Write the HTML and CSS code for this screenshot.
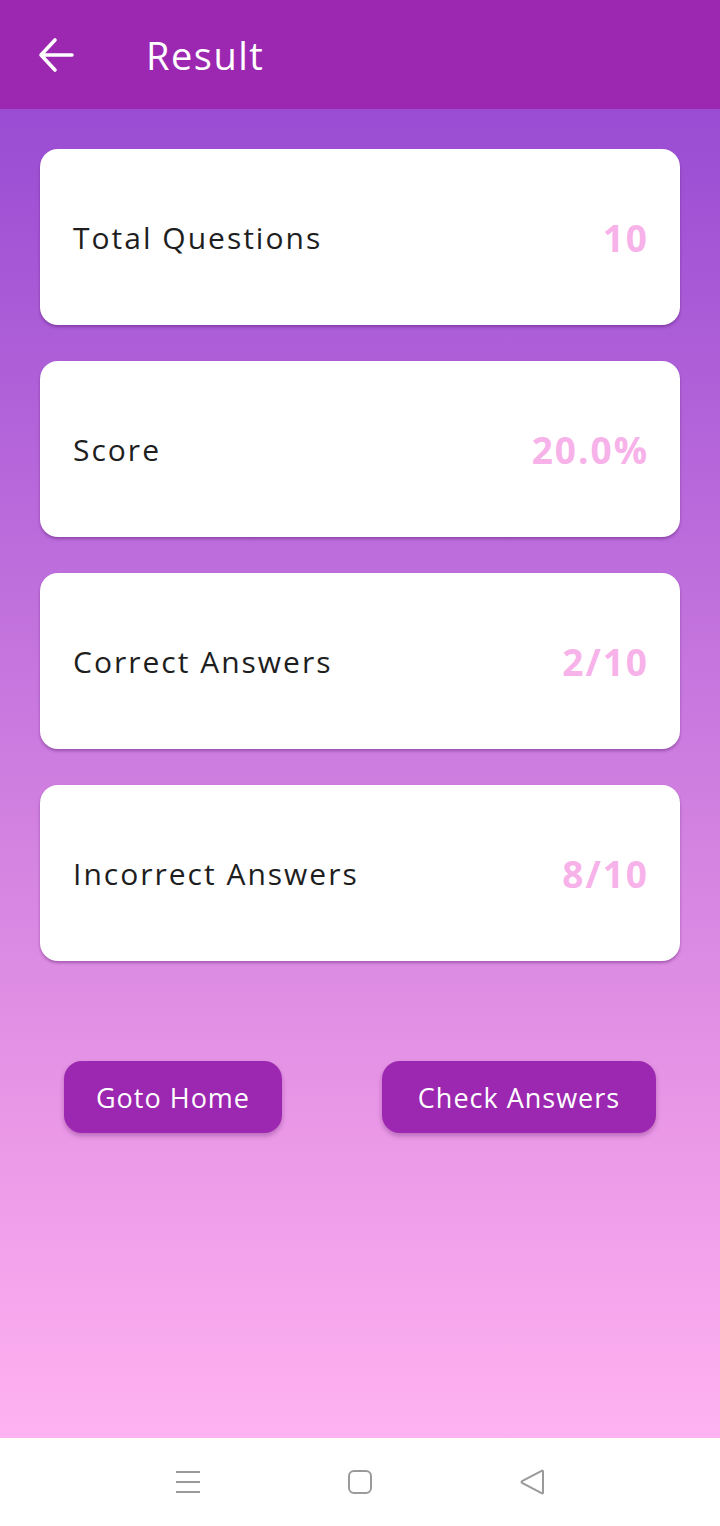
FILE: index.html
```html
<!DOCTYPE html>
<html>
<head>
<meta charset="utf-8">
<link rel="stylesheet" href="styles.css">
</head>
<body>
<div class="screen">
  <header class="appbar">
    <svg class="back" width="36" height="36" viewBox="0 0 36 36"><path d="M34 18H3 M17 3 L3 18 L17 33" fill="none" stroke="#fff" stroke-width="3.6" stroke-linecap="round" stroke-linejoin="round"/></svg>
    <h1 class="title">Result</h1>
  </header>
  <main class="content">
    <div class="card"><span class="label">Total Questions</span><span class="value">10</span></div>
    <div class="card"><span class="label">Score</span><span class="value">20.0%</span></div>
    <div class="card"><span class="label">Correct Answers</span><span class="value">2/10</span></div>
    <div class="card"><span class="label">Incorrect Answers</span><span class="value">8/10</span></div>
    <div class="actions">
      <button class="btn btn-home">Goto Home</button>
      <button class="btn btn-check">Check Answers</button>
    </div>
  </main>
  <nav class="navbar">
    <svg width="28" height="28" viewBox="0 0 28 28"><g stroke="#9a9a9a" stroke-width="2"><line x1="2" y1="4" x2="26" y2="4"/><line x1="2" y1="14" x2="26" y2="14"/><line x1="2" y1="24" x2="26" y2="24"/></g></svg>
    <svg width="28" height="28" viewBox="0 0 28 28"><rect x="3" y="3" width="22" height="22" rx="5" fill="none" stroke="#9a9a9a" stroke-width="2"/></svg>
    <svg width="28" height="28" viewBox="0 0 28 28"><path d="M25 3.5 L25 24.5 Q25 26 23.6 25.2 L4 14.8 Q3 14 4 13.2 L23.6 2.8 Q25 2 25 3.5 Z" fill="none" stroke="#9a9a9a" stroke-width="2" stroke-linejoin="round"/></svg>
  </nav>
</div>
</body>
</html>
```

FILE: styles.css
```css
* { box-sizing: border-box; }
html, body { margin: 0; padding: 0; }
body { font-family: "Open Sans", "Noto Sans", sans-serif; }
.screen {
  width: 720px;
  height: 1526px;
  display: flex;
  flex-direction: column;
}
.appbar {
  height: 109px;
  background: #9c27b0;
  display: flex;
  align-items: center;
  padding-left: 38px;
  flex-shrink: 0;
}
.back { display: block; }
.title {
  margin: 0 0 0 72px;
  color: #fff;
  font-size: 38px;
  font-weight: 500;
  letter-spacing: 1.5px;
}
.content {
  flex: 1;
  background: linear-gradient(to bottom, #9a4cd3 0%, #e896e6 75%, #ffb2f1 100%);
  padding: 40px 40px 0;
  display: flex;
  flex-direction: column;
  gap: 36px;
}
.card {
  height: 176px;
  background: #fff;
  border-radius: 18px;
  box-shadow: 0 2px 3px rgba(60, 0, 80, 0.35);
  display: flex;
  align-items: center;
  justify-content: space-between;
  padding: 0 33px 0 33px;
}
.label {
  font-size: 30px;
  color: #1e1e1e;
  letter-spacing: 2px;
}
.value {
  font-size: 37px;
  font-weight: 700;
  color: #f7b2ea;
  letter-spacing: 2px;
  margin-right: -2px;
}
.actions {
  display: flex;
  justify-content: space-between;
  padding: 64px 24px 0;
}
.btn {
  height: 72px;
  border: none;
  border-radius: 18px;
  background: #9c27b0;
  color: #fff;
  font-family: inherit;
  font-size: 27px;
  letter-spacing: 1px;
  box-shadow: 0 3px 5px rgba(80, 0, 90, 0.3);
}
.btn-home { width: 218px; }
.btn-check { width: 274px; }
.navbar {
  height: 88px;
  background: #fff;
  display: flex;
  align-items: center;
  justify-content: center;
  gap: 144px;
  flex-shrink: 0;
}
.navbar svg { display: block; }
```
